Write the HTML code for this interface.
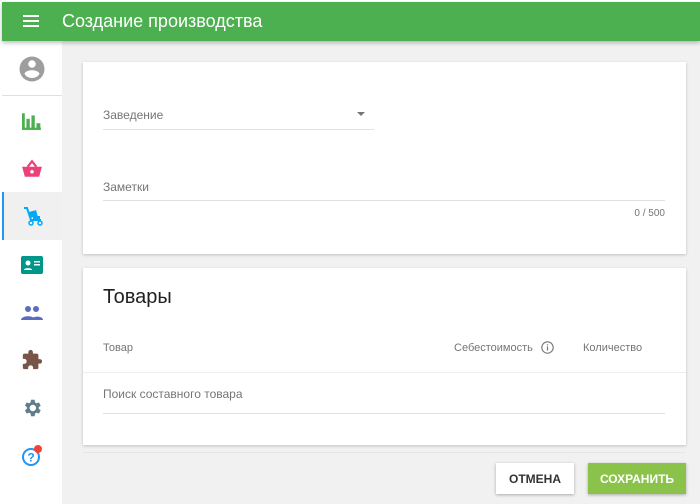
<!DOCTYPE html><html><head><meta charset="utf-8"><style>
*{box-sizing:border-box;margin:0;padding:0}
body{width:700px;height:504px;background:#fff;font-family:"Liberation Sans",sans-serif;position:relative;overflow:hidden}
.hdr{position:absolute;left:2px;top:2px;right:0;height:39px;background:#4caf50;box-shadow:0 2px 4px rgba(0,0,0,.25);z-index:2}
.hdr .t{position:absolute;left:60px;top:9px;color:#fff;font-size:18px}
.main{position:absolute;left:2px;top:41px;right:0;bottom:0;background:#f1f1f1}
.side{position:absolute;left:2px;top:41px;width:60px;bottom:0;background:#fff}
.ic{position:absolute;left:0;width:60px;height:48px;display:flex;align-items:center;justify-content:center}
.card{position:absolute;left:83px;width:603px;background:#fff;box-shadow:0 1px 3px rgba(0,0,0,.2)}
.lbl{position:absolute;color:#757575;font-size:12px}
.line{position:absolute;height:1px;background:#e0e0e0}
.btn{position:absolute;top:463px;height:31px;font-size:12px;font-weight:bold;display:flex;align-items:center;justify-content:center;box-shadow:0 1px 3px rgba(0,0,0,.3)}
</style></head><body>
<div class="main"></div>
<div class="side">
 <div class="ic" style="top:4px"><svg width="30" height="30" viewBox="0 0 24 24"><path fill="#9e9e9e" d="M12 2a10 10 0 100 20 10 10 0 000-20zm0 3a3 3 0 110 6 3 3 0 010-6zm0 14.2a7.2 7.2 0 01-6-3.2c0-2 4-3.1 6-3.1s6 1.1 6 3.1a7.2 7.2 0 01-6 3.2z"/></svg></div>
 <div style="position:absolute;left:0;top:54px;width:60px;height:1px;background:#e0e0e0"></div>
 <div class="ic" style="top:56px"><svg width="20" height="18" viewBox="0 0 18 16" fill="#4caf50"><rect x="0" y="1" width="2.5" height="15"/><rect x="4" y="6" width="3" height="10"/><rect x="8.5" y="3" width="3" height="13"/><rect x="13" y="10" width="3.5" height="6"/><rect x="0" y="14" width="17" height="2"/></svg></div>
 <div class="ic" style="top:104px"><svg width="22" height="20" viewBox="0 0 20 18"><path fill="#ec407a" d="M1 7h18l-2.5 9h-13z"/><path d="M6 7l4-5 4 5" stroke="#ec407a" stroke-width="2" fill="none"/><circle cx="10" cy="11.5" r="1.6" fill="#fff"/></svg></div>
 <div class="ic" style="top:151px;height:48px;background:#f0f0f0;border-left:2px solid #2196f3"><svg width="22" height="22" viewBox="0 0 22 22"><path d="M2 3h3l4 12h10" stroke="#03a9f4" stroke-width="2" fill="none"/><rect x="8" y="6" width="7" height="6" fill="#03a9f4" transform="rotate(-15 11 9)"/><rect x="11" y="11" width="7" height="3" fill="#03a9f4"/><circle cx="9" cy="18" r="2" fill="none" stroke="#03a9f4" stroke-width="1.5"/><circle cx="18" cy="18" r="2" fill="none" stroke="#03a9f4" stroke-width="1.5"/></svg></div>
 <div class="ic" style="top:200px"><svg width="22" height="18" viewBox="0 0 22 18"><rect width="22" height="18" rx="2" fill="#009688"/><circle cx="7" cy="7" r="2.5" fill="#fff"/><path d="M3 14c0-2.5 8-2.5 8 0z" fill="#fff"/><rect x="13" y="5" width="6" height="1.5" fill="#fff"/><rect x="13" y="8" width="6" height="1.5" fill="#fff"/></svg></div>
 <div class="ic" style="top:248px"><svg width="22" height="16" viewBox="0 0 22 16" fill="#5c6bc0"><circle cx="7" cy="4" r="3"/><circle cx="15" cy="4" r="3"/><path d="M0 15c0-5 14-5 14 0zM10 15c0-4 12-5 12 0z"/></svg></div>
 <div class="ic" style="top:295px"><svg width="22" height="22" viewBox="0 0 24 24"><path fill="#795548" d="M20.5 11H19V7a2 2 0 00-2-2h-4V3.5a2.5 2.5 0 00-5 0V5H4a2 2 0 00-2 2v3.8h1.5a2.7 2.7 0 010 5.4H2V20a2 2 0 002 2h3.8v-1.5a2.7 2.7 0 015.4 0V22H17a2 2 0 002-2v-4h1.5a2.5 2.5 0 000-5z"/></svg></div>
 <div class="ic" style="top:343px"><svg width="22" height="22" viewBox="0 0 24 24"><path fill="#607d8b" d="M19.4 13a7.5 7.5 0 000-2l2.1-1.6-2-3.5-2.5 1a7 7 0 00-1.7-1L14.9 3h-4l-.4 2.9a7 7 0 00-1.7 1l-2.5-1-2 3.5L6.4 11a7.5 7.5 0 000 2l-2.1 1.6 2 3.5 2.5-1a7 7 0 001.7 1l.4 2.9h4l.4-2.9a7 7 0 001.7-1l2.5 1 2-3.5zM12.9 15.5a3.5 3.5 0 110-7 3.5 3.5 0 010 7z"/></svg></div>
 <div class="ic" style="top:391px"><svg width="24" height="24" viewBox="0 0 24 24"><circle cx="11" cy="13" r="8" fill="none" stroke="#2196f3" stroke-width="2"/><text x="11" y="17.5" font-size="12" font-weight="bold" fill="#2196f3" text-anchor="middle" font-family="Liberation Sans">?</text><circle cx="18" cy="5" r="4" fill="#f44336"/></svg></div>
</div>
<div class="hdr"><svg style="position:absolute;left:21px;top:13px" width="16" height="12" viewBox="0 0 16 12" fill="#fff"><rect width="16" height="2"/><rect y="5" width="16" height="2"/><rect y="10" width="16" height="2"/></svg><div class="t">Создание производства</div></div>
<div class="card" style="top:62px;height:192px">
 <div class="lbl" style="left:20px;top:46px">Заведение</div>
 <svg style="position:absolute;left:274px;top:50px" width="8" height="4"><path d="M0 0h8L4 4z" fill="#757575"/></svg>
 <div class="line" style="left:20px;top:67px;width:271px"></div>
 <div class="lbl" style="left:20px;top:118px">Заметки</div>
 <div class="line" style="left:20px;top:138px;width:562px"></div>
 <div class="lbl" style="right:21px;top:146px;font-size:10px">0 / 500</div>
</div>
<div class="card" style="top:268px;height:177px">
 <div style="position:absolute;left:20px;top:18px;font-size:20px;color:#212121">Товары</div>
 <div class="lbl" style="left:20px;top:74px;font-size:11px">Товар</div>
 <div class="lbl" style="left:371px;top:74px;font-size:11px">Себестоимость</div>
 <svg style="position:absolute;left:458px;top:73px" width="13" height="13" viewBox="0 0 13 13"><circle cx="6.5" cy="6.5" r="5.7" fill="none" stroke="#757575" stroke-width="1.1"/><rect x="5.9" y="5.5" width="1.2" height="4" fill="#757575"/><rect x="5.9" y="3.3" width="1.2" height="1.2" fill="#757575"/></svg>
 <div class="lbl" style="left:500px;top:74px;font-size:11px">Количество</div>
 <div class="line" style="left:0;top:104px;width:603px;background:#eee"></div>
 <div class="lbl" style="left:20px;top:119px">Поиск составного товара</div>
 <div class="line" style="left:20px;top:145px;width:562px"></div>
</div>
<div style="position:absolute;left:83px;top:452px;width:603px;height:1px;background:#e6e6e6"></div>
<div class="btn" style="left:496px;width:78px;background:#fff;color:#333">ОТМЕНА</div>
<div class="btn" style="left:588px;width:98px;background:#8bc34a;color:#fff">СОХРАНИТЬ</div>
</body></html>
